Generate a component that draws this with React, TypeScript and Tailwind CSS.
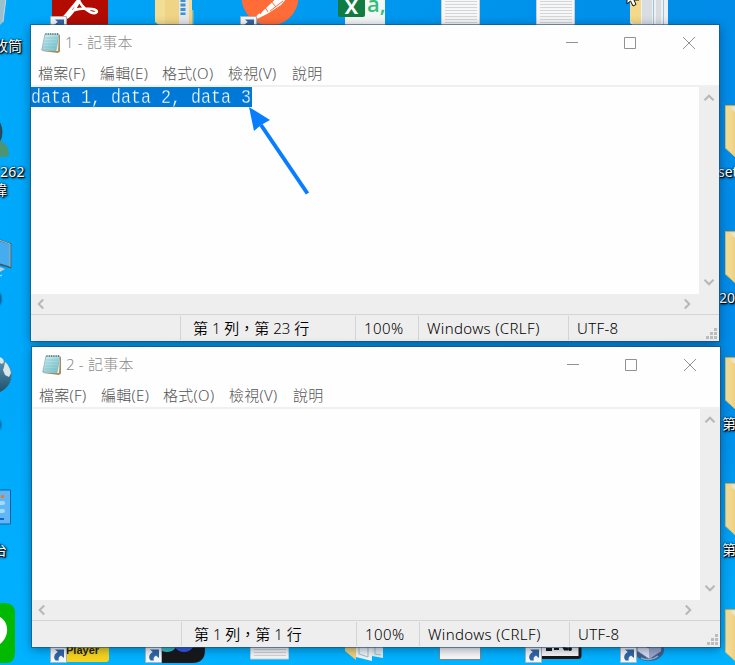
import type { ReactNode } from "react";

const sans = "font-['Noto_Sans','Noto_Sans_CJK_TC',sans-serif]";
const labelText =
  "whitespace-nowrap text-[14px] leading-[18px] text-white [text-shadow:1px_1px_1px_#000,1px_1px_3px_#000,0_0_2px_#001c40]";

function Shape({ className, box, children }: { className: string; box: string; children: ReactNode }) {
  return (
    <svg className={`absolute block overflow-visible ${className}`} viewBox={box} fill="none">
      {children}
    </svg>
  );
}

function Label({ className, children }: { className: string; children: ReactNode }) {
  return <span className={`absolute ${labelText} ${className}`}>{children}</span>;
}

function Shortcut({ className }: { className: string }) {
  return (
    <Shape className={`h-[17px] w-[17px] ${className}`} box="0 0 17 17">
      <path d="M.5.5h16v16H.5z" fill="#f5f7f8" stroke="#a9b4bd" />
      <path d="M5 3.5h9v8.5l-3-2.6C8.8 10.5 8.2 12 8.8 14.5H5.6C3 11.5 4.2 8 7.8 6z" fill="#3265a6" />
    </Shape>
  );
}

function FolderColumn() {
  return (
    <div className="absolute left-[718px] top-[105px] flex w-[17px] flex-col">
      {["set", "20", "第", "第", ""].map((name, index) => (
        <div key={index} className="flex h-[126px] flex-col items-end gap-[6px]">
          <svg className="h-[52px] w-[10px] shrink-0" viewBox="0 0 10 52" fill="none">
            <path d="M0 1h10v51L0 43z" fill="#f3dc95" />
            <path d="M1 2l9 5v43L1 43z" fill="url(#folder)" />
            <path d="M0 .5h10" stroke="#cfa94d" />
            <path d="M.5 1v42L10 51.5" stroke="#dcbd69" />
            <path d="M6 2h4v5z" fill="#e7e5dc" />
            <defs>
              <linearGradient id="folder" x1="0" x2="1">
                <stop stopColor="#f8e3a0" />
                <stop offset="1" stopColor="#edcf7e" />
              </linearGradient>
            </defs>
          </svg>
          <span className={`${labelText} self-start ${index > 1 ? "pl-[4px]" : index === 1 ? "pl-px" : ""}`}>{name}</span>
        </div>
      ))}
    </div>
  );
}

function Paper({ className, box }: { className: string; box: string }) {
  return (
    <Shape className={className} box={box}>
      <path d="M.5-3v29h38V-3z" fill="#f7f7f7" stroke="#c9ced2" />
      <path d="M4 1.5h32M4 4.5h32M4 7.5h32M4 10.5h32M4 13.5h32M4 16.5h32M4 19.5h32M4 22.5h32" stroke="#d3d5d7" />
    </Shape>
  );
}

function DesktopIcons() {
  return (
    <>
      <Shape className="left-0 top-0 h-[26px] w-[8px]" box="0 0 8 26">
        <path d="M0-2h6L3 22l-3 3z" fill="#9cbfcd" />
        <path d="M6-2L3 22" stroke="#c4d8df" />
      </Shape>
      <Label className="left-[-6px] top-[37px]">收筒</Label>

      <Shape className="left-[51px] top-0 h-[26px] w-[57px]" box="0 0 57 26">
        <path d="M1-5h56v31H1z" fill="#b30b00" />
        <path d="M14 16c5-5 13-9 27-7 8 1 5 6-2 3C33 9 28 3 27-3M29-2C27 5 22 12 17 17c-3 2-5 1-3-1Z" stroke="#fff" strokeWidth="2.6" strokeLinejoin="round" />
      </Shape>
      <Shortcut className="left-[50px] top-[16px]" />

      <Shape className="left-[155px] top-0 h-[26px] w-[39px]" box="0 0 39 26">
        <path d="M0-2h37v27H4l-4-3z" fill="#f3dc93" />
        <path d="M24-2h10v27H24z" fill="#e5e7e8" />
        <path d="M28-1v16" stroke="#3d93cf" strokeWidth="5" strokeDasharray="3 1.5" />
        <path d="M34 10h4.5v15H34zM10-2h14v27H10z" fill="#ecd080" fillOpacity=".65" />
      </Shape>

      <Shape className="left-[240px] top-0 h-[26px] w-[60px]" box="0 0 60 26">
        <circle cx="30" cy="-3" r="28.5" fill="#ff6c37" />
        <path d="M17 19l5-7L36-2h11l-6 7-14 9z" fill="#fff" />
        <path d="M24 9L36-2M30 11L43 1M25 7l3 5M31 1l5 6" stroke="#ff6c37" />
        <path d="M12 22l8-8" stroke="#fff" strokeWidth="2" />
      </Shape>
      <Shortcut className="left-[240px] top-[16px]" />

      <div className="absolute left-[345px] top-0 h-[26px] w-[40px] bg-[#f5f7f6]">
        <div className="absolute left-[-7px] top-0 flex h-[17px] w-[27px] items-center justify-center rounded-b-[2px] bg-[#107c41] pb-[3px] font-['Open_Sans',sans-serif] text-[20px] font-bold leading-none text-white">
          X
        </div>
        <span className="absolute left-[22px] top-[-8px] font-['Open_Sans',sans-serif] text-[22px] font-semibold leading-[22px] text-[#2fbf79]">a,</span>
      </div>

      <Paper className="left-[441px] top-0 h-[26px] w-[39px]" box="0 0 39 26" />
      <Paper className="left-[536px] top-0 h-[26px] w-[39px]" box="0 0 39 26" />

      <Shape className="left-[626px] top-0 h-[26px] w-[43px]" box="0 0 43 26">
        <path d="M4-2h38v28H8l-4-3z" fill="#edf0f2" />
        <path d="M4-2h11v26H8l-4-2z" fill="#f3d989" />
        <path d="M16-2h10v26H16zM30-2h5v26h-5z" fill="#d9dce0" />
        <path d="M27.5-2v28M37.5-2v28" stroke="#9fc4da" />
        <path d="M1-12V4l3.5-3L7 6l3-1.5L8 0h5L1-12z" fill="#fff" stroke="#111" />
      </Shape>

      <Shape className="left-0 top-[118px] h-[40px] w-[10px]" box="0 0 10 40">
        <ellipse cx="-4" cy="14" rx="6.5" ry="12" fill="#284b59" />
        <path d="M0 23c5 1 9 6 9 14l-3 2H0z" fill="#4c9472" />
      </Shape>
      <Label className="left-0 top-[163px] tracking-[.3px]">262</Label>
      <Label className="left-[-7px] top-[181px]">瑋</Label>
      <Shape className="left-0 top-[239px] h-[39px] w-[12px]" box="0 0 12 39">
        <path d="M-1 1l11.5 4v23.5L-1 25z" fill="#45acef" stroke="#46545e" strokeWidth="1.6" />
        <path d="M-1 1l11 4v23" stroke="#c7d3da" strokeWidth=".8" />
        <path d="M0 28l5 2-5 3z" fill="#c4ccd1" />
        <path d="M0 37l2-1" stroke="#dce5e9" />
      </Shape>
      <div className="absolute left-[-9px] top-[292px] h-[14px] w-[10px] rounded-full bg-[#073e63] blur-[1px]" />

      <Shape className="left-0 top-[356px] h-[38px] w-[12px]" box="0 0 12 38">
        <circle cx="-7" cy="19" r="18.5" fill="url(#globe)" />
        <path d="M0 1l3 2 1 3-2 2-2-1zM5 6c3 2 5 6 6 11l-2 4-4-2-2-5 1-3z" fill="#dce6e6" />
        <defs>
          <linearGradient id="globe" x1="0" y1="0" x2="0" y2="1">
            <stop stopColor="#5b9dbd" />
            <stop offset="1" stopColor="#204c66" />
          </linearGradient>
        </defs>
      </Shape>
      <div className="absolute left-[-9px] top-[419px] h-[12px] w-[10px] rounded-full bg-[#07527f] blur-[1px]" />
      <Shape className="left-0 top-[489px] h-[37px] w-[12px]" box="0 0 12 37">
        <path d="M-1 1h11.5v34H-1z" fill="#62b6f5" stroke="#09669e" />
        <circle cx="2.5" cy="7.5" r="1.7" fill="#f57a17" />
        <path d="M0 14h3M0 22h3" stroke="#9dddff" strokeWidth="4" strokeLinecap="round" />
        <path d="M0 30h4" stroke="#086bca" strokeWidth="2" />
      </Shape>
      <Label className="left-[-7px] top-[541px]">台</Label>

      <Shape className="left-0 top-[603px] h-[60px] w-[15px]" box="0 0 15 60">
        <path d="M0 0h5q10 0 10 10v40q0 10-10 10H0z" fill="#00b900" />
        <path d="M0 14c9 5 10 19 0 27z" fill="#fff" />
      </Shape>

      <FolderColumn />

      <div className="absolute left-[60px] top-[639px] flex h-[23px] w-[49px] items-end rounded-b-[3px] bg-[#f7d31d] pb-[4px] pl-[6px] font-['Liberation_Sans',sans-serif] text-[11px] font-bold leading-[16px] text-[#272415]">
        Player
      </div>
      <Shortcut className="left-[50px] top-[646px]" />
      <Shape className="left-[150px] top-[640px] h-[23px] w-[55px]" box="0 0 55 23">
        <path d="M0 0h55v10q0 13-13 13H0z" fill="#171819" />
        <circle cx="17" cy="1" r="11" fill="#35c0c6" />
        <circle cx="34" cy="1" r="11" fill="#315be8" />
      </Shape>
      <Shortcut className="left-[145px] top-[646px]" />
      <Paper className="left-[250px] top-[633px] h-[26px] w-[39px]" box="0 0 39 26" />
      <Shape className="left-[345px] top-[646px] h-[16px] w-[39px]" box="0 0 39 16">
        <path d="M27 0h11v12l-11-2z" fill="#e3edf0" />
        <path d="M10 0h17v15l-16-4z" fill="#f1f4f4" />
        <path d="M0 0h11v14L0 5z" fill="#efcf7a" />
        <path d="M14 0v8l9 3V0M30 0v8l6 1" stroke="#9bc0cb" />
      </Shape>
      <div className="absolute left-[439px] top-[642px] h-[18px] w-[42px] border border-[#7a898e] bg-[#f8f8f8]" />
      <Shape className="left-[530px] top-[637px] h-[23px] w-[52px]" box="0 0 52 23">
        <rect x="2" y="1" width="48" height="19.5" rx="2" fill="#f7f7f7" stroke="#171717" strokeWidth="3" />
        <path d="M16 12.5h6M31 5l4 7h3" stroke="#171717" strokeWidth="3" />
        <path d="M24 12h5" stroke="#171717" strokeWidth="2" />
        <circle cx="40" cy="12" r="2" fill="#111" />
      </Shape>
      <Shortcut className="left-[525px] top-[646px]" />
      <Shape className="left-[634px] top-[637px] h-[25px] w-[31px]" box="0 0 31 25">
        <ellipse cx="15" cy="13" rx="15" ry="11" fill="#3c608f" />
        <path d="M3 5l12 6 12-6v9l-12 8-12-8z" fill="#d7dcec" stroke="#5576a2" />
        <path d="M15 11v11l12-8V5z" fill="#9ba8cc" />
        <path d="M7 21q9 4 17-2" stroke="#8da8c5" strokeWidth="1.5" />
      </Shape>
      <Shortcut className="left-[620px] top-[646px]" />
    </>
  );
}

function NotepadIcon() {
  return (
    <svg className="ml-[10px] h-[22px] w-[20px] shrink-0" viewBox="0 0 20 22" fill="none">
      <path d="M4 3h15v16.5L17 21 1 19z" fill="#a38d66" />
      <path d="M4 2h14l-1 17-16-.5z" fill="#f1f3df" />
      <path d="M4 2h14l-3 16.5L.7 18z" fill="url(#cover)" stroke="#7fadb5" strokeWidth=".7" />
      <path d="M4 6h12M3.5 9h12M3 12h12M2 15h13" stroke="#5cadb9" strokeWidth=".6" opacity=".65" />
      <path d="M5 3V1M7.3 3V1M9.6 3V1M11.9 3V1M14.2 3V1M16.5 3V1" stroke="#637d80" />
      <defs>
        <linearGradient id="cover" x1="0" y1="0" x2="1" y2="1">
          <stop stopColor="#d8f0f1" />
          <stop offset="1" stopColor="#6ebfcb" />
        </linearGradient>
      </defs>
    </svg>
  );
}

function Chevron({ turn }: { turn: string }) {
  return (
    <svg className={`h-[12px] w-[12px] ${turn}`} viewBox="0 0 12 12" fill="none">
      <path d="M1.5 8.2L6 3.7l4.5 4.5" stroke="#b7b7b7" strokeWidth="2" />
    </svg>
  );
}

const menu = [
  { text: "檔案(F)", width: "w-[62px]" },
  { text: "編輯(E)", width: "w-[62px]" },
  { text: "格式(O)", width: "w-[66px]" },
  { text: "檢視(V)", width: "w-[64px]" },
  { text: "說明", width: "w-[40px]" },
];

function Notepad({ title, position, className, body }: { title: string; position: string; className: string; body?: string }) {
  return (
    <section
      className={`absolute flex w-[688px] flex-col bg-[#fefefe] shadow-[0_0_0_1px_rgba(35,75,105,.6),0_2px_10px_rgba(0,20,50,.45)] ${className}`}
    >
      <header className="flex h-[36px] shrink-0 items-center text-[#8c8c8c]">
        <NotepadIcon />
        <span className="-mt-[2px] ml-[4px] grow text-[15px] font-light leading-[20px] tracking-[.2px]">{title} - 記事本</span>
        <svg className="-mt-[2px] mr-[24px] h-[13px] w-[129px]" viewBox="0 0 129 13" fill="none" stroke="#929292">
          <path d="M0 6.5h12M58.5 1.5h11v11h-11zM117 1l12 12M129 1l-12 12" />
        </svg>
      </header>
      <nav className="flex h-[24px] shrink-0 items-center pl-[7px] text-[15px] font-light leading-[20px] tracking-[.3px] text-[#555]">
        {menu.map((item) => (
          <span key={item.text} className={`whitespace-nowrap ${item.width}`}>
            {item.text}
          </span>
        ))}
      </nav>
      <div className="h-[2px] shrink-0 bg-[#f0f0f0]" />
      <div className="flex min-h-0 grow">
        <div className="grow">
          {body && (
            <div className="h-[20px] w-[221px] bg-[#0078d7] pt-px">
              <span className="block origin-center scale-y-[1.25] whitespace-pre font-['Liberation_Mono',monospace] text-[16.66px] leading-[20px] text-white [-webkit-text-stroke:.3px_#0078d7]">
                {body}
              </span>
            </div>
          )}
        </div>
        <div className="flex w-[20px] flex-col items-center justify-between bg-[#eee] pb-[6px] pt-[5px]">
          <Chevron turn="" />
          <Chevron turn="rotate-180" />
        </div>
      </div>
      <div className="flex h-[20px] shrink-0 items-center justify-between bg-[#eee] pb-px pl-[4px] pr-[26px]">
        <Chevron turn="-rotate-90" />
        <Chevron turn="rotate-90" />
      </div>
      <footer className="flex h-[27px] shrink-0 items-stretch border-t border-[#d4d4d4] bg-[#eee] py-px text-[15px] leading-[25px] text-black">
        <span className="w-[150px] border-r border-[#d4d4d4]" />
        <span className="w-[175px] whitespace-nowrap border-r border-[#d4d4d4] pl-[12px] font-[350]">{position}</span>
        <span className="w-[63px] border-r border-[#d4d4d4] pl-[8px] font-[350] tracking-[.4px]">100%</span>
        <span className="w-[150px] whitespace-nowrap border-r border-[#d4d4d4] pl-[8px] font-[350] tracking-[.35px]">Windows (CRLF)</span>
        <span className="grow pl-[8px] font-[350] tracking-[.35px]">UTF-8</span>
        <svg className="mr-[2px] mt-[12px] h-[11px] w-[11px]" viewBox="0 0 11 11" fill="#bcbcbc">
          <path d="M8 0h3v3H8zM4 4h3v3H4zM8 4h3v3H8zM0 8h3v3H0zM4 8h3v3H4zM8 8h3v3H8z" />
        </svg>
      </footer>
    </section>
  );
}

export default function App() {
  return (
    <main
      className={`relative h-[665px] w-[735px] overflow-hidden bg-[linear-gradient(to_right,#00a9fb_0%,#0096ee_55%,#008ce8_100%)] ${sans}`}
    >
      <div className="absolute inset-0 bg-[linear-gradient(to_bottom,transparent_60%,#00b2ff_100%)]" />
      <DesktopIcons />
      <Notepad title="1" position="第 1 列，第 23 行" className="left-[31px] top-[25px] h-[316px]" body="data 1, data 2, data 3" />
      <Notepad title="2" position="第 1 列，第 1 行" className="left-[32px] top-[347px] h-[300px]" />
      <Shape className="left-[248px] top-[106px] h-[90px] w-[62px]" box="0 0 62 90">
        <path d="M13 19l46.5 68.500" stroke="#087eff" strokeWidth="4" />
        <path d="M1 1l5 24 7-6 9-5z" fill="#087eff" />
      </Shape>
    </main>
  );
}
